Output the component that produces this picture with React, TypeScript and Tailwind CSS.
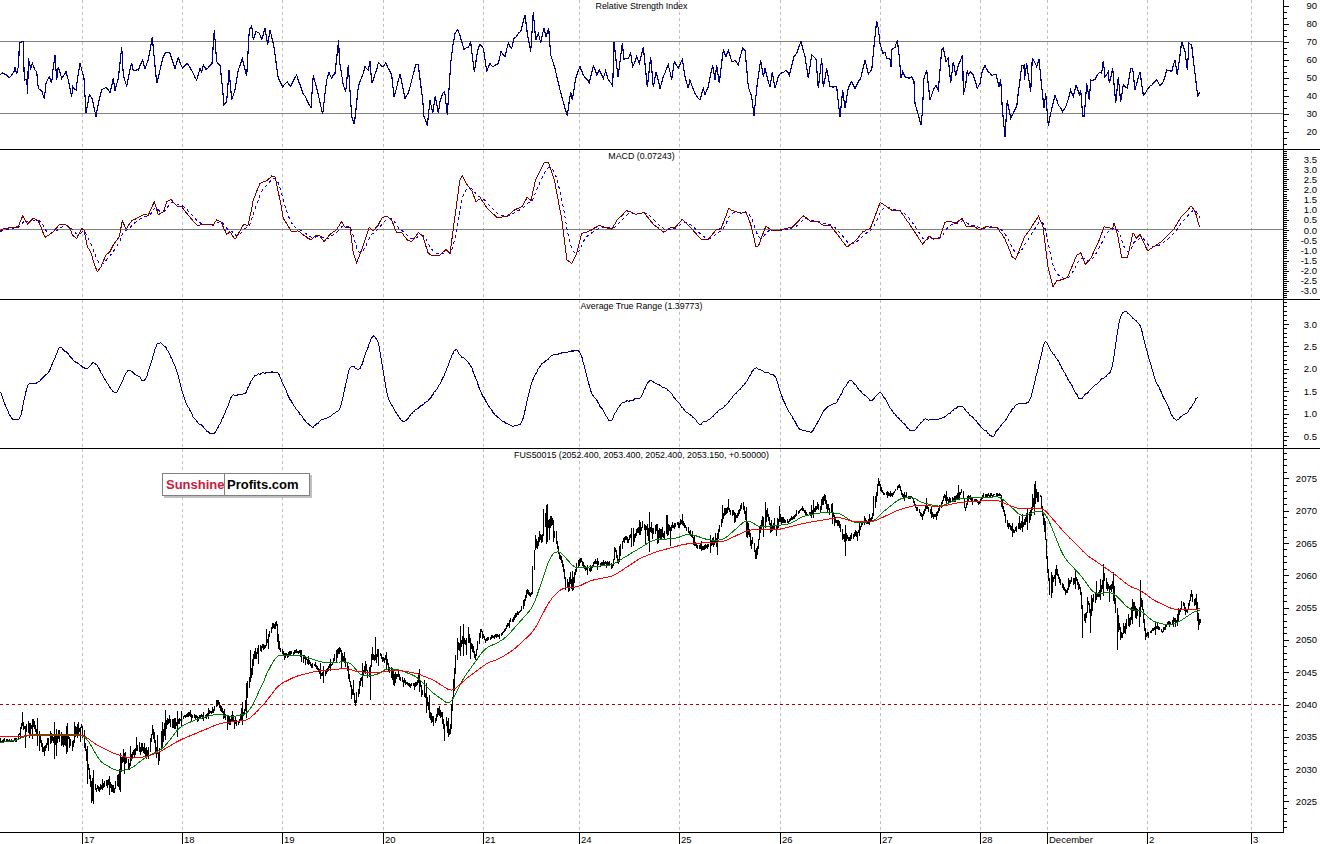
import React from "react";

type P = [number, number];
type T = [number, number, number];

function rng(seed: number) {
  let a = seed;
  return () => {
    a |= 0;
    a = (a + 0x6d2b79f5) | 0;
    let t = Math.imul(a ^ (a >>> 15), 1 | a);
    t = (t + Math.imul(t ^ (t >>> 7), 61 | t)) ^ t;
    return ((t ^ (t >>> 14)) >>> 0) / 4294967296;
  };
}

// Data is noted in zoom coordinates relative to an origin.
const z = (x0: number, y0: number, s: number[], xs = 3): P[] => {
  const o: P[] = [];
  for (let i = 0; i < s.length; i += 2) o.push([x0 + s[i] / xs, y0 + s[i + 1] / 3]);
  return o;
};
const zt = (x0: number, y0: number, s: number[]): T[] => {
  const o: T[] = [];
  for (let i = 0; i < s.length; i += 3) o.push([x0 + s[i] / 3, y0 + s[i + 1] / 3, s[i + 2] / 3]);
  return o;
};
function join<A extends number[]>(...parts: A[][]): A[] {
  const out: A[] = [];
  for (const part of parts) for (const p of part) if (!out.length || p[0] > out[out.length - 1][0]) out.push(p);
  return out;
}
function densify(pts: P[], step: number, noise: number, seed: number): P[] {
  const r = rng(seed);
  const out: P[] = [];
  for (let i = 0; i < pts.length - 1; i++) {
    const [x0, y0] = pts[i];
    const [x1, y1] = pts[i + 1];
    out.push([x0, y0]);
    const n = Math.floor((x1 - x0) / step);
    for (let k = 1; k < n; k++) {
      const f = k / n;
      out.push([x0 + (x1 - x0) * f, y0 + (y1 - y0) * f + (r() - 0.5) * noise]);
    }
  }
  out.push(pts[pts.length - 1]);
  return out;
}
function smooth(pts: P[], win: number, noise = 0, seed = 1): P[] {
  const d = densify(pts, 1, 0, 1);
  const r = rng(seed);
  let wander = 0;
  return d.map(([x], i) => {
    let s = 0;
    let n = 0;
    for (let k = Math.max(0, i - win); k <= Math.min(d.length - 1, i + win); k++) {
      s += d[k][1];
      n++;
    }
    wander = wander * 0.75 + (r() - 0.5) * noise;
    return [x, s / n + wander] as P;
  });
}
const toStr = (p: P[]) => p.map(([x, y]) => `${x.toFixed(1)},${y.toFixed(1)}`).join(" ");

const rsi = join<P>(
  z(0, 0, [0,225,8,218,20,225,28,233,42,215,44,200,50,222,56,195,58,130,70,125,73,240,80,238,83,283,85,175,92,205,97,190,105,210,110,215,115,265,125,272,133,297,138,250,148,230,155,250,158,215,165,165,170,240,175,200,185,235,198,215,205,240,215,290,218,260,228,270,240,188,252,235,258,340,268,283,277,297,288,350,298,298,305,270,318,262,330,278,340,235,345,272,355,235,365,140,370,225,380,258,395,188,400,212,415,210,428,180,435,207,445,180,457,112,463,175,470,250,480,210,490,170,497,157,510,160,525,205,535,173,548,205,562,190,575,212,590,240,600,205,605,215,610,195,618,208,636,190,643,90,650,185,660,195,665,240,672,315,680,305,687,210,695,300,705,270,715,210,727,175,740,228,748,90,755,77,760,120,768,95,778,100,785,118,795,85,803,135,810,90,820,130,835,235,848,260,862,245,872,258,890,225,905,270,925,310,933,322,940,225,950,265,968,342,980,240,987,218,995,235,1005,220,1016,120,1018,180,1030,255,1037,275,1045,195,1055,350,1063,373,1075,260,1088,225,1095,200,1105,210,1110,183,1115,250,1130,210,1135,188,1150,200,1157,188,1175,225,1182,290,1200,222,1215,295,1225,280,1248,193,1255,195,1268,300,1272,350,1282,378,1290,300,1298,340,1306,288,1315,340]),
  z(440, 0, [0,305,8,280,14,275,22,345,28,255,32,190,38,140,45,100,53,88,65,125,72,148,85,142,92,127,103,215,113,150,120,133,130,145,140,215,150,190,160,200,175,190,183,155,195,170,205,130,215,145,222,115,242,95,255,45,262,100,272,155,280,37,287,120,295,100,302,128,312,85,318,110,326,85,332,165,345,205,360,270,368,300,382,348,392,275,397,300,407,235,420,200,430,225,448,248,460,197,470,225,478,210,490,235,497,212,503,235,518,258,522,125,534,232,547,130,552,178,565,175,572,160,578,200,590,170,598,190,610,140,622,262,632,170,640,262,648,215,660,265,670,230,685,195,695,240,703,185,715,205,727,178,735,230,745,265,750,240,765,280,780,300,790,265,795,285,805,260,818,195,825,240,830,195,838,250,850,150,858,170,865,150,875,185,885,180,895,195,908,145,915,150,925,260,935,290,942,348,950,265,962,180,970,230,975,205,990,262,997,215,1005,265,1015,228,1038,210,1048,225,1062,170,1072,155,1083,125,1095,170,1105,235,1115,165,1128,178,1135,265,1145,175,1150,262,1160,205,1170,260,1190,260,1200,352,1208,270,1215,325,1225,265,1235,245,1245,265,1262,235,1275,180,1285,222,1295,210,1303,130,1310,62]),
  z(840, 0, [115,85,120,130,128,160,135,158,140,175,150,178,153,200,156,148,165,142,172,120,178,170,183,235,188,215,195,230,207,235,215,230,222,245,225,310,232,335,243,375,247,340,252,235,260,210,270,300,280,270,288,255,295,270,305,150,310,145,318,185,325,175,332,250,340,185,347,228,355,195,368,165,370,285,377,255,382,210,385,225,392,215,400,225,412,265,420,250,425,220,435,197,445,215,455,227,468,222,477,260,482,238,487,325,495,410,502,300,512,355,520,340,530,320,540,240,545,197,552,195,553,240,560,190,572,275,577,175,590,200,597,178,605,260,612,325,617,280,625,378,632,340,645,285,655,315,668,335,677,320,685,298,692,270,700,290,708,255,718,285,722,270,728,348,733,348,740,250,748,300,752,240,765,238,775,220,785,220,790,182,795,230,805,215,808,250,818,205,827,310,835,232,842,305,850,255,862,265,872,205,878,207,885,270,900,215]),
  z(1100, 0, [130,285,145,265,170,240,180,258,190,245,200,210,215,215,225,180,232,225,245,125,255,155,262,210,267,130,275,135,285,220,293,290,299,275]),
);

const macd = join<P>(
  z(0, 150, [0,245,8,237,55,230,68,198,83,222,100,205,115,212,135,262,160,245,178,225,195,223,210,235,217,255,230,265,245,235,252,240,262,290,272,305,282,340,292,365,303,350,318,315,330,305,340,285,358,260,367,213,378,238,395,212,410,205,430,195,445,195,463,155,475,195,490,185,500,155,512,148,530,168,545,170,560,190,590,225,640,225,650,210,662,215,680,253,690,245,705,268,730,225,745,225,760,150,780,100,800,92,815,78,825,80,840,150,850,205,875,245,895,243,915,258,932,270,945,258,960,258,972,275,990,253,1010,238,1025,215,1035,232,1050,232,1060,310,1070,338,1085,300,1108,232,1120,242,1135,225,1145,205,1160,198,1175,210,1190,248,1205,248,1222,270,1235,275,1255,248,1268,258,1285,310,1298,318,1318,315]),
  z(440, 150, [0,315,12,298,20,312,30,200,40,90,45,78,55,105,65,125,72,155,82,145,95,175,115,203,135,198,150,180,165,170,175,142,183,152,192,90,200,65,210,37,218,38,230,90,245,210,255,330,265,340,275,310,285,250,300,243,320,227,345,238,355,212,375,182,395,193,410,187,430,225,450,247,460,235,472,233,487,208,505,235,525,268,540,268,555,240,565,235,580,176,605,190,615,185,625,225,635,290,640,288,655,228,665,240,680,242,710,230,730,197,745,215,760,215,770,225,785,227,800,255,818,292,835,272,850,245,865,235,885,157,910,183,925,183,945,225,970,283,983,258,992,268,1005,262,1015,217,1025,213,1035,220,1050,205,1058,230,1075,230,1085,240,1098,230,1120,232,1135,265,1150,320,1157,328,1175,260,1185,240,1203,198,1212,230,1222,350,1232,410,1240,392,1253,388,1262,380,1280,315,1288,308,1297,343,1308,325,1325,270,1335,230,1352,235,1355,220,1362,255,1370,322,1382,322,1393,248,1400,265,1407,253,1422,302,1440,285,1452,272,1475,238,1490,200,1500,185,1510,168,1518,185,1527,232], 2.01),
);

const atr: P[] = ([[0,390],[5,405],[12,420],[20,420],[28,383],[40,382],[50,370],[60,346],[70,355],[80,365],[87,368],[95,362],[103,375],[115,395],[120,385],[128,368],[135,375],[145,383],[157,342],[165,345],[175,365],[185,400],[195,420],[213,435],[222,420],[232,395],[245,393],[255,375],[265,373],[278,372],[290,400],[300,415],[312,428],[325,418],[340,410],[350,365],[360,370],[372,335],[378,340],[388,400],[403,422],[415,410],[430,400],[442,380],[455,349],[470,365],[480,390],[495,415],[510,427],[522,422],[532,380],[540,365],[552,355],[568,352],[580,350],[590,390],[610,422],[622,402],[640,398],[650,380],[662,385],[672,395],[685,410],[700,425],[715,415],[730,400],[745,385],[755,367],[775,375],[785,405],[800,430],[812,433],[825,408],[835,405],[850,378],[862,392],[872,402],[880,390],[895,415],[912,433],[925,418],[940,420],[960,405],[975,420],[992,437],[1005,420],[1015,405],[1030,402],[1045,340],[1060,365],[1080,400],[1100,380],[1112,370],[1120,315],[1125,312],[1140,325],[1155,380],[1175,422],[1190,410],[1198,395]] as P[]);

const price = join<T>(
  zt(0, 690, [0,153,4,30,152,5,50,148,8,65,105,18,85,130,30,100,110,25,130,160,25,165,110,35,200,140,25,215,165,30,245,130,30,255,190,35,265,235,30,285,300,25,295,290,15,320,265,12,345,275,25,365,190,40,385,250,25,400,200,20,420,190,20,445,170,25,460,110,45,475,180,35,490,100,25,510,70,25,530,85,20,550,70,8,590,80,7,640,65,7,650,40,12,670,75,18,690,100,25,715,85,20,735,55,20]),
  zt(200, 600, [150,240,50,165,180,25,185,150,20,200,110,25,215,60,13,228,70,15,238,150,10,265,165,8,295,160,8,320,190,10,345,185,10,368,215,15,395,185,8,420,150,25,435,190,15,448,270,25,466,330,30,480,255,15,495,210,25,512,200,85,520,230,50,535,180,20,555,175,12,580,210,30,600,225,12,625,250,6,650,245,10,655,220,15,668,300,25,690,325,25,715,345,30,740,360,30,748,390,20,755,270,40,770,120,25,790,125,25,810,130,25,825,160,15,840,80,8,855,115,8,875,105,6,900,103,4]),
  zt(440, 450, [205,515,10,220,495,10,245,470,8,258,415,15,275,425,8,280,290,65,290,280,25,310,215,35,330,185,35,345,250,15,355,310,15,372,385,25,385,430,50,395,430,30,407,370,20,418,320,15,435,350,6,450,358,8,465,330,10,490,340,8,515,350,6,525,295,25,535,325,15,548,265,20,575,270,15,600,245,12,610,235,20,622,250,40,640,265,30,665,275,25,690,260,25,705,235,10,725,225,15,740,245,5,770,285,10,800,285,8,830,265,25,850,200,15,865,190,15,890,200,10,908,150,20,920,205,25,932,255,25,945,300,25,960,220,30,975,205,25,990,230,25,1005,235,35,1030,220,10,1060,205,5,1085,170,5,1105,190,8,1120,175,15,1145,165,25,1165,180,20,1195,210,10]),
  zt(830, 460, [40,225,25,55,235,15,70,215,15,85,200,12,105,180,10,125,175,10,135,120,35,143,70,8,155,100,4,185,108,6,205,72,6,215,105,6,245,108,5,260,140,12,275,175,15,290,135,12,305,160,8,320,155,10,340,100,10,355,115,12,370,105,15,395,85,8,402,145,6,415,105,8,445,125,6,460,102,4,510,105,5,518,155,20,528,205,15,545,220,12,565,195,15,590,170,25,600,170,40,612,125,25,628,120,25,640,210,15,645,250,30,652,345,20,660,390,40,670,335,20,678,330,25,695,385,15,705,405,6,715,380,15,740,370,12,750,395,15,758,470,30,772,430,30,780,460,25,790,410,25,815,395,15,822,370,30,835,395,20,850,370,30,858,480,70,872,540,35,885,490,35,897,470,40]),
  zt(1040, 560, [277,110,30,290,170,35,300,130,30,315,240,10,330,220,5,350,205,10,365,220,4,385,190,5,410,180,10,425,125,15,440,145,15,452,90,12,465,130,20,472,180,15,476,200,15,481,180,8]),
);

const red = join<P>(
  z(0, 690, [0,138,60,140,105,132,180,132,250,135,290,165,340,190,390,205,440,200,480,185,540,150,600,125,660,100,745,90,790,45,825,0]),
  z(200, 600, [50,372,145,360,200,300,235,255,290,228,350,213,440,205,470,215,530,218,590,210,650,220,700,240,755,275,800,235,860,190,900,175]),
  z(440, 450, [220,600,280,545,330,450,365,415,415,410,450,392,520,378,600,325,650,305,735,282,850,275,925,240,1020,238,1100,218,1200,202]),
  z(830, 460, [0,175,30,172,70,185,130,185,210,148,260,135,330,140,390,127,500,120,560,145,640,145,710,225,770,285,850,340,900,380]),
  z(1040, 560, [300,90,340,120,400,148,440,150,480,146]),
);

const green = join<P>(
  z(0, 690, [0,158,50,150,80,137,130,135,250,135,270,160,300,215,350,243,390,238,440,200,490,175,540,110,590,88,650,72,700,80,745,70,775,10,782,0]),
  z(200, 600, [60,337,100,350,150,325,190,240,230,165,300,165,370,188,440,185,460,195,480,228,530,225,560,205,600,210,650,230,700,280,750,315,790,235,855,145,900,125]),
  z(440, 450, [200,560,280,470,330,320,350,300,365,310,405,355,515,345,540,330,640,270,710,265,745,250,805,270,850,270,920,208,960,232,1050,222,1090,198,1150,187,1200,190]),
  z(830, 460, [30,160,70,188,130,185,160,155,210,115,250,112,275,128,330,140,390,115,510,110,575,170,630,150,650,165,700,290,760,355,790,400,850,398,900,450]),
  z(1040, 560, [300,150,340,185,380,195,410,190,470,150,480,155]),
);

function signalOf(pts: P[]) {
  const dense = densify(pts, 1, 0, 1);
  const out: P[] = [];
  let v = dense[0][1];
  for (const [x, y] of dense) {
    v += (y - v) * 0.2;
    out.push([x, v]);
  }
  return out;
}

function barsPath(data: T[]) {
  const r = rng(77);
  let d = "";
  let i = 0;
  let w = 0;
  let prev: number | null = null;
  for (let x = data[0][0]; x <= data[data.length - 1][0]; x += 1.1) {
    while (i < data.length - 2 && data[i + 1][0] < x) i++;
    const a = data[i];
    const b = data[i + 1];
    const f = Math.min(1, Math.max(0, (x - a[0]) / (b[0] - a[0])));
    const c = a[1] + (b[1] - a[1]) * f;
    const h = a[2] + (b[2] - a[2]) * f;
    w += (r() - 0.5) * h * 1.1;
    w = Math.max(-h, Math.min(h, w));
    const y = c + w;
    const spike = r() < 0.24 ? h * 1.3 : 0;
    const up = 0.8 + r() * Math.min(7, h * 0.7) + (r() < 0.5 ? spike : 0);
    const dn = 0.8 + r() * Math.min(7, h * 0.7) + (r() < 0.5 ? spike : 0);
    const px = Math.round(x) + 0.5;
    let top = y - up;
    let bot = y + dn;
    if (prev !== null) {
      top = Math.min(top, prev);
      bot = Math.max(bot, prev);
    }
    d += `M${px} ${top.toFixed(1)}V${bot.toFixed(1)}`;
    prev = y;
  }
  return d;
}

const rsiLine = toStr(densify(rsi, 1.6, 1.8, 5));
const macdLine = toStr(densify(macd, 1.3, 0.5, 6));
const macdSignal = toStr(signalOf(macd));
const atrLine = toStr(smooth(atr, 2, 1.5, 7));
const barsD = barsPath(price);
const redLine = toStr(smooth(red, 4));
const greenLine = toStr(smooth(green, 4));

const gridXs = [82, 182, 282, 383, 483, 579, 679, 780, 880, 980, 1047, 1147, 1251];
const xLabels = ["17", "18", "19", "20", "21", "24", "25", "26", "27", "28", "December", "2", "3"];

function Grid({ top, bottom }: { top: number; bottom: number }) {
  return (
    <g>
      {gridXs.map((x) => (
        <line key={x} x1={x + 0.5} x2={x + 0.5} y1={top} y2={bottom} stroke="#c0c0c0" strokeDasharray="3 3" shapeRendering="crispEdges" />
      ))}
    </g>
  );
}

function HLine({ y, color = "#808080", dash }: { y: number; color?: string; dash?: string }) {
  return <line x1={0} x2={1283} y1={y} y2={y} stroke={color} strokeDasharray={dash} shapeRendering="crispEdges" />;
}

function Axis({
  top,
  height,
  majors,
  minorStep,
}: {
  top: number;
  height: number;
  majors: [number, string][];
  minorStep: number;
}) {
  const minors: number[] = [];
  const start = majors[0][0];
  for (let y = start; y < top + height; y += minorStep) minors.push(y);
  for (let y = start - minorStep; y >= top; y -= minorStep) minors.push(y);
  return (
    <svg className="block h-full w-[37px] shrink-0" viewBox={`0 ${top} 37 ${height}`}>
      <line x1={0.5} x2={0.5} y1={top} y2={top + height} stroke="#000" shapeRendering="crispEdges" />
      {minors.map((y, i) => (
        <line key={i} x1={0} x2={4} y1={Math.round(y) + 0.5} y2={Math.round(y) + 0.5} stroke="#000" shapeRendering="crispEdges" />
      ))}
      {majors.map(([y, t]) => (
        <g key={t}>
          <line x1={0} x2={6} y1={Math.round(y) + 0.5} y2={Math.round(y) + 0.5} stroke="#000" shapeRendering="crispEdges" />
          <text x={34} y={y + 3.5} textAnchor="end" className="fill-black text-[9.5px]">
            {t}
          </text>
        </g>
      ))}
    </svg>
  );
}

function Pane({
  title,
  top,
  height,
  axis,
  divider = true,
  children,
}: {
  title: string;
  top: number;
  height: number;
  axis: React.ReactNode;
  divider?: boolean;
  children: React.ReactNode;
}) {
  return (
    <div className={`flex w-full shrink-0 border-black ${divider ? "border-b" : ""}`} style={{ height: height + (divider ? 1 : 0) }}>
      <div className="relative h-full w-[1283px] shrink-0">
        <svg className="block h-full w-full" viewBox={`0 ${top} 1283 ${height}`}>
          {children}
        </svg>
        <div className="absolute inset-x-0 top-0 text-center text-[8.85px] leading-[12px] text-black">{title}</div>
      </div>
      {axis}
    </div>
  );
}

const rsiTicks = ["90", "80", "70", "60", "50", "40", "30", "20"].map((t, i) => [5.5 + 18 * i, t] as [number, string]);
const macdTicks = ["3.5", "3.0", "2.5", "2.0", "1.5", "1.0", "0.5", "0.0", "-0.5", "-1.0", "-1.5", "-2.0", "-2.5", "-3.0"].map(
  (t, i) => [159 + 10.15 * i, t] as [number, string],
);
const atrTicks = ["3.0", "2.5", "2.0", "1.5", "1.0", "0.5"].map((t, i) => [324 + 22.4 * i, t] as [number, string]);
const priceTicks = ["2075", "2070", "2065", "2060", "2055", "2050", "2045", "2040", "2035", "2030", "2025"].map(
  (t, i) => [478.4 + 32.3 * i, t] as [number, string],
);

export default function App() {
  return (
    <div className="relative flex h-[844px] w-[1320px] flex-col overflow-hidden bg-white font-['Liberation_Sans',sans-serif]">
      <Pane title="Relative Strength Index" top={0} height={149} axis={<Axis top={0} height={149} majors={rsiTicks} minorStep={6} />}>
        <Grid top={0} bottom={149} />
        <HLine y={41.5} />
        <HLine y={113.5} />
        <polyline points={rsiLine} fill="none" stroke="#000080" strokeWidth={1.15} shapeRendering="crispEdges" />
      </Pane>
      <Pane title="MACD (0.07243)" top={150} height={149} axis={<Axis top={150} height={149} majors={macdTicks} minorStep={2.03} />}>
        <Grid top={150} bottom={299} />
        <HLine y={229.5} />
        <polyline points={macdSignal} fill="none" stroke="#0000ff" strokeDasharray="3 3" shapeRendering="crispEdges" />
        <polyline points={macdLine} fill="none" stroke="#800000" shapeRendering="crispEdges" />
      </Pane>
      <Pane title="Average True Range (1.39773)" top={300} height={148} axis={<Axis top={300} height={148} majors={atrTicks} minorStep={4.48} />}>
        <Grid top={300} bottom={448} />
        <polyline points={atrLine} fill="none" stroke="#000080" shapeRendering="crispEdges" />
      </Pane>
      <Pane
        divider={false}
        title="FUS50015 (2052.400, 2053.400, 2052.400, 2053.150, +0.50000)"
        top={449}
        height={384}
        axis={<Axis top={449} height={384} majors={priceTicks} minorStep={6.46} />}
      >
        <Grid top={449} bottom={832} />
        <HLine y={704.5} color="#b00000" dash="3 3" />
        <path d={barsD} fill="none" stroke="#000" shapeRendering="crispEdges" />
        <polyline points={greenLine} fill="none" stroke="#008000" shapeRendering="crispEdges" />
        <polyline points={redLine} fill="none" stroke="#ff0000" shapeRendering="crispEdges" />
        <line x1={0} x2={1283} y1={832.5} y2={832.5} stroke="#000" shapeRendering="crispEdges" />
      </Pane>
      <svg className="block h-[11px] w-[1320px] shrink-0" viewBox="0 833 1320 11">
        {gridXs.map((x, i) => (
          <g key={x}>
            <line x1={x + 0.5} x2={x + 0.5} y1={833} y2={844} stroke="#000" shapeRendering="crispEdges" />
            <text x={x + 2} y={843} className="fill-black text-[9.5px]">
              {xLabels[i]}
            </text>
          </g>
        ))}
      </svg>
      <div className="absolute left-[162px] top-[473px] flex h-[23px] w-[148px] items-center border border-[#808080] bg-white text-[13px] leading-none font-bold shadow-[2px_2px_0_#c0c0c0]">
        <span className="flex h-full w-[62px] items-center border-r border-[#808080] pl-[3px] text-[#c8203f]">Sunshine</span>
        <span className="pl-[2px] text-black">Profits.com</span>
      </div>
    </div>
  );
}
